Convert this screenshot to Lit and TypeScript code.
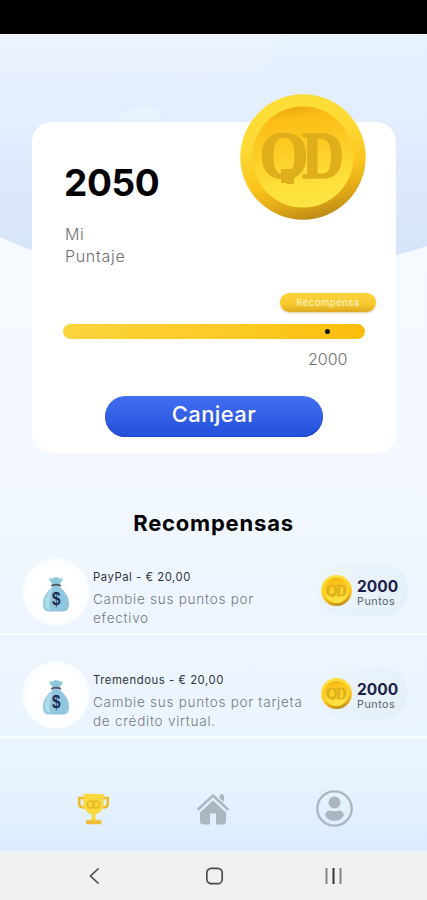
import { LitElement, html, css, svg } from "lit";
import { customElement, property } from "lit/decorators.js";

interface Reward {
  title: string;
  lines: string[];
  points: number;
}

const REWARDS: Reward[] = [
  { title: "PayPal - € 20,00", lines: ["Cambie sus puntos por", "efectivo"], points: 2000 },
  { title: "Tremendous - € 20,00", lines: ["Cambie sus puntos por tarjeta", "de crédito virtual."], points: 2000 },
];

@customElement("qd-coin")
export class QdCoin extends LitElement {
  static styles = css`
    :host { display: block; }
    svg { display: block; width: 100%; height: 100%; }
    text { font-family: "Liberation Serif", serif; font-weight: 700; font-size: 68px; fill: #dfae1b; stroke: #dfae1b; stroke-width: 1.6; }
  `;
  render() {
    return html`<svg viewBox="0 0 126 126">
      <defs>
        <linearGradient id="rim" x1="0.35" y1="0" x2="0.6" y2="1">
          <stop offset="0" stop-color="#fddf38" />
          <stop offset="0.35" stop-color="#fdd934" />
          <stop offset="0.65" stop-color="#fbc41c" />
          <stop offset="0.86" stop-color="#dfa516" />
          <stop offset="1" stop-color="#b98a18" />
        </linearGradient>
        <linearGradient id="face" x1="0.4" y1="0" x2="0.55" y2="1">
          <stop offset="0" stop-color="#eda912" />
          <stop offset="0.12" stop-color="#fcbd16" />
          <stop offset="0.45" stop-color="#fdce28" />
          <stop offset="0.75" stop-color="#fede38" />
          <stop offset="1" stop-color="#fde544" />
        </linearGradient>
        <clipPath id="tail"><path d="M0 0H69V84H54V90H0Z" /></clipPath>
      </defs>
      <circle cx="63" cy="63" r="62.7" fill="url(#rim)" />
      <circle cx="63" cy="63" r="50.5" fill="url(#face)" />
      <g clip-path="url(#tail)"><text x="19.500" y="84" textLength="49" lengthAdjust="spacingAndGlyphs">Q</text></g>
      <rect x="41" y="75" width="13" height="14" fill="#dfae1b" />
      <text x="62" y="84" textLength="42" lengthAdjust="spacingAndGlyphs">D</text>
    </svg>`;
  }
}

@customElement("reward-row")
export class RewardRow extends LitElement {
  @property({ attribute: false }) reward!: Reward;

  static styles = css`
    :host { display: flex; box-sizing: border-box; height: 103px; padding: 26px 19px 0 22px; border-bottom: 2px solid #fafdff; }
    .avatar { flex: none; width: 68px; height: 68px; border-radius: 50%; display: flex; align-items: center; justify-content: center; background: radial-gradient(circle, #fff 45%, #fbfdff 66%, #f5faff 71%); }
    .avatar svg { display: block; width: 28px; height: 38px; margin-top: 3px; }
    .avatar text { font: 700 19px "Liberation Sans", sans-serif; fill: #202b52; }
    .copy { flex: 1; padding: 11px 0 0 3px; white-space: nowrap; }
    .title { font-size: 11.3px; line-height: 16px; letter-spacing: 0.54px; color: #30343d; margin-bottom: 5px; }
    .line { font-size: 13.5px; line-height: 19px; font-weight: 300; color: #747a83; letter-spacing: 0.74px; }
    .badge { flex: none; display: flex; align-items: center; box-sizing: border-box; width: 92px; height: 52px; margin: 6px 0 0; padding-left: 5px; border-radius: 26px; background: linear-gradient(135deg, #edf5fc, #e3eff8); gap: 5px; }
    qd-coin { width: 31px; height: 31px; }
    .amount { padding-top: 4px; }
    .points { font-size: 15.5px; font-weight: 700; line-height: 19px; color: #20214b; }
    .unit { font-size: 10.8px; line-height: 13px; margin-top: -1px; color: #5b6170; font-weight: 400; letter-spacing: 0.5px; }
  `;
  render() {
    const r = this.reward;
    return html`
      <div class="avatar">
        <svg viewBox="0 0 28 38">
          <path d="M7 3 Q10 4.5 12 2.5 Q14 1.5 16 2.5 Q19 4.5 21 3 Q20.5 6 17.6 9.5 L18 12 Q27.6 20 27 30 Q26.6 36.5 21 36.5 H7 Q1.4 36.5 1 30 Q.5 20 10.3 12 L10.6 9.5 Q7.4 6 7 3Z" fill="#91c6df" />
          <path d="M11 12 Q3 19 3 28 Q3 34 8 35 Q6 26 11 12Z" fill="#b0dbeb" />
          <path d="M9.9 10.5 Q14 8.8 18.3 10.5" fill="none" stroke="#4e5661" stroke-width="1.8" stroke-linecap="round" />
          <text x="10" y="30" textLength="8.500" lengthAdjust="spacingAndGlyphs">$</text>
        </svg>
      </div>
      <div class="copy">
        <div class="title">${r.title}</div>
        ${r.lines.map((l) => html`<div class="line">${l}</div>`)}
      </div>
      <div class="badge">
        <qd-coin></qd-coin>
        <div class="amount">
          <div class="points">${r.points}</div>
          <div class="unit">Puntos</div>
        </div>
      </div>
    `;
  }
}

const trophy = svg`
  <path d="M7 6 H2.2 V11 Q2.2 15.5 7 15.5 M26 6 h4.8 v5 q0 4.500 -4.800 4.500" fill="none" stroke="#f0bb2c" stroke-width="2.700" />
  <path d="M6.500 2 H26.500 V12 Q26 20 18.400 22.600 V25.500 Q18.600 27 21 28.500 H12 Q14.500 27 14.700 25.500 V22.600 Q7 20 6.500 12Z" fill="#fbd83b" />
  <circle cx="13.800" cy="12.500" r="3.500" fill="none" stroke="#e8b828" stroke-width="1.500" />
  <circle cx="19.200" cy="12.500" r="3.500" fill="none" stroke="#e8b828" stroke-width="1.500" />
  <rect x="9" y="28.300" width="15.500" height="4" rx="1" fill="#eebd35" />`;

@customElement("app-root")
export class AppRoot extends LitElement {
  static styles = css`
    :host { display: flex; flex-direction: column; width: 427px; height: 900px; overflow: hidden; font-family: Inter, "Open Sans", sans-serif; }
    .status { flex: none; height: 34px; background: #000; }
    .screen { flex: 1; min-height: 0; position: relative; display: flex; flex-direction: column; background: linear-gradient(#f5faff 0, #f3f9ff 430px, #edf5fe 560px, #ebf5fe 720px, #dcecfd 817px); }
    .sky { position: absolute; inset: 0 0 auto; width: 427px; height: 230px; }
    .card { flex: none; position: relative; box-sizing: border-box; width: 364px; height: 331px; margin: 88px 0 0 32px; border-radius: 20px; background: #fff; display: flex; flex-direction: column; align-items: flex-start; padding: 38px 20px 0 31px; }
    .coin { position: absolute; left: 208px; top: -28px; width: 126px; height: 126px; }
    .score { font-size: 37px; line-height: 46px; font-weight: 700; color: #000; margin-left: 1px; letter-spacing: -0.4px; }
    .label { width: 70px; margin: 17px 0 0 2px; font-size: 16px; line-height: 22px; font-weight: 300; color: #707070; letter-spacing: 0.7px; }
    .tag { align-self: flex-end; box-sizing: border-box; width: 96px; height: 19px; margin-top: 26px; border-radius: 10px; background: linear-gradient(#fdd43a 0, #f7c82e 60%, #dda823 100%); box-shadow: 0 1px 2px #b78b3c70; color: #fff5cf; font-size: 9.5px; line-height: 19px; letter-spacing: 0.5px; text-align: center; }
    .track { display: flex; align-items: center; justify-content: flex-end; box-sizing: border-box; width: 302px; height: 15px; margin-top: 12px; padding-right: 35px; border-radius: 8px; background: linear-gradient(90deg, #fbd43c, #fdca25 55%, #fbbd0c); }
    .dot { width: 5px; height: 5px; border-radius: 50%; background: #111; margin-bottom: 1px; }
    .goal { margin: 9px 0 0 245px; font-size: 16px; line-height: 22px; font-weight: 300; color: #707070; }
    .redeem { box-sizing: border-box; width: 218px; height: 41px; margin: 26px 0 0 42px; padding: 0 0 4px; border: 0; border-radius: 21px; background: linear-gradient(#426ef2, #2450da); box-shadow: inset 0 -1px 1px #1943c3; color: #fff; font: 500 22px/37px Inter, sans-serif; letter-spacing: 0.4px; text-align: center; }
    .heading { flex: none; margin: 56px 0 0; font-size: 22px; line-height: 28px; font-weight: 700; letter-spacing: 0.8px; text-align: center; color: #000; }
    .list { flex: none; margin-top: -5px; }
    .tabs { flex: none; display: flex; justify-content: space-between; padding: 0 74px 0 77px; margin-top: 52px; align-items: center; }
    .tabs svg { display: block; }
    .system { flex: none; height: 49px; display: flex; align-items: center; justify-content: space-between; padding: 1px 84px 0 86px; box-sizing: border-box; background: #f1f1f1; }
    .system svg { display: block; fill: none; stroke: #4b4b4b; stroke-width: 1.700; }
  `;
  render() {
    return html`
      <div class="status"></div>
      <main class="screen">
        <svg class="sky" viewBox="0 0 427 230">
          <defs>
            <linearGradient id="g" x1="0" y1="0" x2="0" y2="1">
              <stop offset="0" stop-color="#e8f2ff" />
              <stop offset="0.45" stop-color="#e1ecfd" />
              <stop offset="1" stop-color="#d6e4fb" />
            </linearGradient>
            <linearGradient id="cloud" x1="0" y1="0" x2="0" y2="1">
              <stop offset="0" stop-color="#edf4ff" />
              <stop offset="1" stop-color="#e7effe" stop-opacity="0.6" />
            </linearGradient>
          </defs>
          <path d="M0 0H427V212Q400 221 385 223H50Q25 215 0 203Z" fill="url(#g)" />
          <path d="M0 0H280Q276 25 263 39Q210 52 150 43Q95 43 72 62Q66 84 54 91Q30 101 0 101Z" fill="url(#cloud)" opacity="0.6" />
          <path d="M118 88Q122 74 136 74Q142 68 151 73Q161 76 162 88Z" fill="#ebf3ff" opacity="0.7" />
          <rect width="427" height="1" fill="#f4f6f8" />
        </svg>
        <section class="card">
          <div class="score">2050</div>
          <div class="label">Mi<br />Puntaje</div>
          <div class="tag">Recompensa</div>
          <div class="track"><div class="dot"></div></div>
          <div class="goal">2000</div>
          <button class="redeem">Canjear</button>
          <qd-coin class="coin"></qd-coin>
        </section>
        <h2 class="heading">Recompensas</h2>
        <div class="list">${REWARDS.map((r) => html`<reward-row .reward=${r}></reward-row>`)}</div>
        <nav class="tabs">
          <svg width="33" height="34" viewBox="0 0 33 34">${trophy}</svg>
          <svg width="32" height="34" viewBox="0 0 32 34" fill="#abb6c0">
            <path d="M1.500 17 L16 3.500 L30.500 17" fill="none" stroke="#abb6c0" stroke-width="2.600" stroke-linecap="round" stroke-linejoin="round" />
            <path d="M16 8.500 L29 20.500 V29 Q29 32.500 25.500 32.500 H19 V21.500 H13 V32.500 H6.500 Q3 32.500 3 29 V20.500Z" />
            <path d="M22.500 3.500 a2.600 2.600 0 0 1 4.500 0 V10 L22.500 6Z" />
          </svg>
          <svg width="37" height="37" viewBox="0 0 37 37" fill="#abb6c0">
            <circle cx="18.500" cy="18.500" r="17.200" fill="none" stroke="#abb6c0" stroke-width="2.300" />
            <circle cx="18.500" cy="12.500" r="6" />
            <path d="M9.200 25.500 Q9.200 20.500 14.500 20.500 Q18.500 22 22.500 20.500 Q27.800 20.500 27.800 25.500 Q25 30.800 18.500 30.800 Q12 30.800 9.200 25.500Z" />
          </svg>
        </nav>
      </main>
      <footer class="system">
        <svg width="18" height="18" viewBox="0 0 18 18"><path d="M12.500 1.500 L4.500 9 L12.500 16.500" /></svg>
        <svg width="18" height="18" viewBox="0 0 18 18"><rect x="0.800" y="1.300" width="15.400" height="15.400" rx="4.500" /></svg>
        <svg width="18" height="18" viewBox="0 0 18 18"><path d="M1.500 1V17M15.500 1V17" stroke="#858585" stroke-width="2" /><path d="M8.500 1V17" stroke="#333" stroke-width="2" /></svg>
      </footer>
    `;
  }
}
